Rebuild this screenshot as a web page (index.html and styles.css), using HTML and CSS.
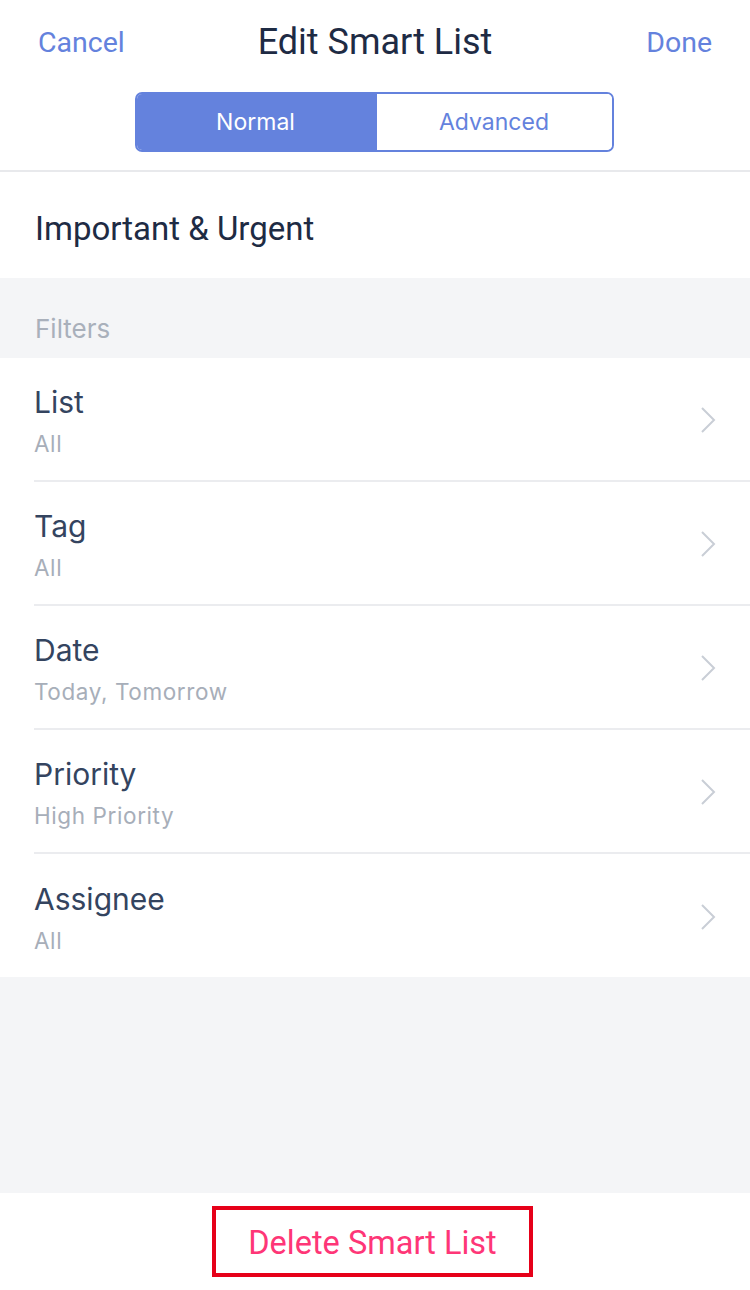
FILE: index.html
```html
<!DOCTYPE html>
<html>
<head>
<meta charset="utf-8">
<link rel="stylesheet" href="styles.css">
</head>
<body>
<div class="page">
  <header class="header">
    <div class="nav">
      <span class="nav-btn left">Cancel</span>
      <span class="nav-title">Edit Smart List</span>
      <span class="nav-btn right">Done</span>
    </div>
    <div class="seg">
      <div class="seg-item active">Normal</div>
      <div class="seg-item">Advanced</div>
    </div>
  </header>
  <div class="name-row">Important &amp; Urgent</div>
  <div class="section-label">Filters</div>
  <div class="list">
    <div class="row">
      <div class="row-text"><div class="row-title">List</div><div class="row-sub">All</div></div>
      <svg class="chev" width="16" height="28" viewBox="0 0 16 28"><path d="M2 2 L14 14 L2 26" fill="none" stroke="#c9ced6" stroke-width="2"/></svg>
    </div>
    <div class="row">
      <div class="row-text"><div class="row-title">Tag</div><div class="row-sub">All</div></div>
      <svg class="chev" width="16" height="28" viewBox="0 0 16 28"><path d="M2 2 L14 14 L2 26" fill="none" stroke="#c9ced6" stroke-width="2"/></svg>
    </div>
    <div class="row">
      <div class="row-text"><div class="row-title">Date</div><div class="row-sub">Today, Tomorrow</div></div>
      <svg class="chev" width="16" height="28" viewBox="0 0 16 28"><path d="M2 2 L14 14 L2 26" fill="none" stroke="#c9ced6" stroke-width="2"/></svg>
    </div>
    <div class="row">
      <div class="row-text"><div class="row-title">Priority</div><div class="row-sub">High Priority</div></div>
      <svg class="chev" width="16" height="28" viewBox="0 0 16 28"><path d="M2 2 L14 14 L2 26" fill="none" stroke="#c9ced6" stroke-width="2"/></svg>
    </div>
    <div class="row">
      <div class="row-text"><div class="row-title">Assignee</div><div class="row-sub">All</div></div>
      <svg class="chev" width="16" height="28" viewBox="0 0 16 28"><path d="M2 2 L14 14 L2 26" fill="none" stroke="#c9ced6" stroke-width="2"/></svg>
    </div>
  </div>
  <div class="spacer"></div>
  <footer class="footer">
    <div class="delete">Delete Smart List</div>
  </footer>
</div>
</body>
</html>
```

FILE: styles.css
```css
* { box-sizing: border-box; }
html, body { margin: 0; padding: 0; }
body {
  width: 750px;
  height: 1290px;
  background: #f4f5f7;
  font-family: "Roboto", "Liberation Sans", sans-serif;
  overflow: hidden;
}
.page {
  display: flex;
  flex-direction: column;
  height: 1290px;
}
.header {
  background: #fff;
  height: 172px;
  border-bottom: 2px solid #e8e9ec;
  display: flex;
  flex-direction: column;
  align-items: center;
}
.nav {
  width: 100%;
  height: 92px;
  display: grid;
  grid-template-columns: 1fr auto 1fr;
  align-items: center;
  padding: 0 38px 8px 38px;
}
.nav-btn {
  color: #6482dd;
  font-size: 28.5px;
}
.nav-btn.right { justify-self: end; }
.nav-title {
  color: #1e2b44;
  font-size: 36px;
}
.seg {
  display: flex;
  width: 479px;
  height: 60px;
  margin-left: -2px;
  border: 2px solid #6482dd;
  border-radius: 7px;
  overflow: hidden;
}
.seg-item {
  flex: 1;
  display: flex;
  align-items: center;
  justify-content: center;
  font-family: "Inter", "Roboto", sans-serif;
  font-size: 23px;
  color: #6482dd;
  background: #fff;
}
.seg-item.active {
  background: #6482dd;
  color: #fff;
  flex: 0 0 240px;
  padding-right: 2px;
}
.name-row {
  background: #fff;
  height: 106px;
  display: flex;
  align-items: center;
  padding: 6px 35px 0;
  font-size: 33px;
  color: #1e2b44;
}
.section-label {
  height: 80px;
  padding: 35px 35px 0;
  font-family: "Inter", sans-serif;
  font-size: 26px;
  color: #a9b0bb;
}
.list {
  background: #fff;
  padding-left: 34px;
}
.row {
  height: 124px;
  display: flex;
  align-items: center;
  justify-content: space-between;
  padding-right: 34px;
  border-bottom: 2px solid #ebecef;
}
.row:last-child { border-bottom: none; height: 123px; }
.row-text {
  display: flex;
  flex-direction: column;
  gap: 12px;
  padding-top: 4px;
}
.row-title {
  font-family: "Inter", sans-serif;
  font-size: 30px;
  color: #34445f;
  line-height: 34px;
}
.row-sub {
  font-family: "Inter", sans-serif;
  font-size: 22.5px;
  color: #a7aeb9;
  letter-spacing: 0.6px;
  line-height: 26px;
}
.chev {
  margin-top: 2px;
}
.spacer { flex: 1; }
.footer {
  background: #fff;
  height: 97px;
  display: flex;
  justify-content: center;
  align-items: center;
}
.delete {
  width: 321px;
  height: 71px;
  margin-right: 5px;
  border: 4px solid #e60019;
  display: flex;
  align-items: center;
  justify-content: center;
  color: #fe3677;
  font-size: 32.5px;
  padding-top: 2px;
}
```
